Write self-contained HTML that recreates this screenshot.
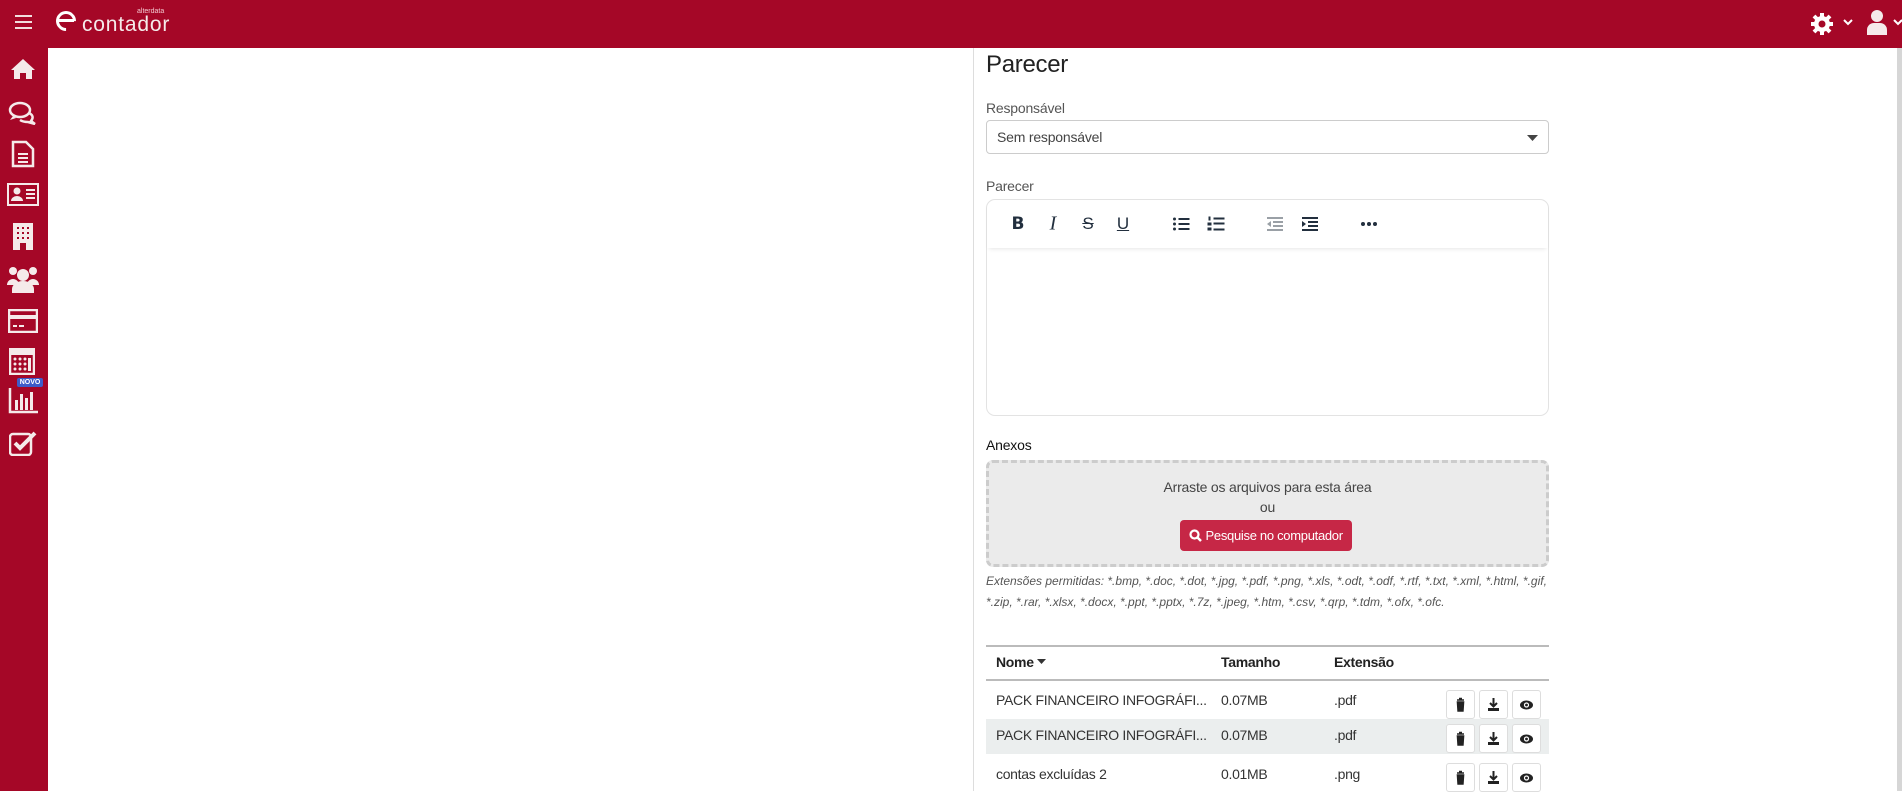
<!DOCTYPE html>
<html><head><meta charset="utf-8"><style>
*{box-sizing:border-box;margin:0;padding:0}
body{width:1902px;height:791px;overflow:hidden;background:#fff;font-family:"Liberation Sans",sans-serif;color:#333;position:relative}
.hdr{position:absolute;left:0;top:0;width:1902px;height:48px;background:#a50727}
.side{position:absolute;left:0;top:48px;width:48px;height:743px;background:#a50727}
.abs{position:absolute}
.panel{position:absolute;left:973px;top:48px;width:1px;height:743px;background:#ddd}
.scroll{position:absolute;left:1897px;top:48px;width:5px;height:743px;background:#d6d6d6}
.lbl{position:absolute;left:986px;font-size:14px;color:#555;letter-spacing:-0.2px}
.sel{position:absolute;left:986px;top:120px;width:563px;height:34px;border:1px solid #ccc;border-radius:4px;font-size:14px;color:#444;padding:8px 10px;letter-spacing:-0.2px}
.ed{position:absolute;left:986px;top:199px;width:563px;height:217px;border:1px solid #e3e3e3;border-radius:9px}
.tb{position:absolute;left:0;top:0;width:100%;height:48px;box-shadow:0 3px 4px -2px rgba(0,0,0,.1)}
.ic{position:absolute;top:24px;transform:translate(-50%,-50%);font-size:17px;color:#222f3e;font-weight:bold}
.drop{position:absolute;left:986px;top:460px;width:563px;height:107px;background:#ebebeb;border:3px dashed #ccc;border-radius:7px;text-align:center;font-size:14px;color:#444;letter-spacing:-0.2px}
.btn{position:absolute;left:1180px;top:520px;width:172px;height:31px;background:#c62746;border-radius:4px;color:#fff;font-size:13px;line-height:31px;text-align:center;letter-spacing:-0.3px}
.ext{position:absolute;left:986px;font-size:12px;font-style:italic;color:#555}
.row{position:absolute;left:986px;width:563px;font-size:14px;color:#333;letter-spacing:-0.3px}
.ab{position:absolute;width:29px;height:29px;border:1px solid #ddd;border-radius:3px;background:#fff}
</style></head><body>
<div class="hdr">
 <div class="abs" style="left:15px;top:15px;width:17px;height:2px;background:#f1dede;box-shadow:0 6px 0 #f1dede,0 12px 0 #f1dede"></div>
 <div class="abs" style="left:56px;top:11px;width:20px;height:20px;border:3px solid #fff;border-radius:50%;border-right-color:transparent;transform:rotate(45deg)"></div>
 <div class="abs" style="left:59px;top:19px;width:15px;height:3px;background:#fff"></div>
 <div class="abs" style="left:82px;top:13px;font-size:21px;color:#f5eaea;letter-spacing:0.8px;line-height:24px;font-weight:normal">contador</div>
 <div class="abs" style="left:137px;top:8px;font-size:7px;color:#f3c8cf">alterdata</div>
 <svg class="abs" style="left:1810px;top:12px" width="24" height="24" viewBox="0 0 24 24"><circle cx="12" cy="12" r="8" fill="#fff"/><g stroke="#fff" stroke-width="4"><line x1="12" y1="1" x2="12" y2="23"/><line x1="1" y1="12" x2="23" y2="12"/><line x1="4" y1="4" x2="20" y2="20"/><line x1="20" y1="4" x2="4" y2="20"/></g><circle cx="12" cy="12" r="3.5" fill="#a50727"/></svg>
 <svg class="abs" style="left:1843px;top:18px" width="10" height="8"><path d="M1 2l4 4 4-4" stroke="#fff" stroke-width="2" fill="none"/></svg>
 <svg class="abs" style="left:1866px;top:9px" width="22" height="26"><circle cx="11" cy="7" r="6" fill="#f5eaea"/><path d="M1 26v-5a7 7 0 0 1 7-7h6a7 7 0 0 1 7 7v5z" fill="#f5eaea"/></svg>
 <svg class="abs" style="left:1893px;top:18px" width="10" height="8"><path d="M1 2l4 4 4-4" stroke="#fff" stroke-width="2" fill="none"/></svg>
</div>
<div class="side">
 <svg class="abs" style="left:10px;top:10px" width="26" height="22" viewBox="0 0 26 22"><path d="M13 1L1 12h3v9h6v-6h6v6h6v-9h3z" fill="#f5eaea"/></svg>
 <svg class="abs" style="left:8px;top:53px" width="30" height="24"><ellipse cx="12" cy="9" rx="10" ry="7" fill="none" stroke="#f5eaea" stroke-width="2.5"/><path d="M5 15l-3 4 6-2" fill="#f5eaea"/><path d="M21 12q6 3 2 8l4 3-7-2q-5 0-8-2" fill="none" stroke="#f5eaea" stroke-width="2.5"/></svg>
 <svg class="abs" style="left:11px;top:92px" width="24" height="28"><path d="M2 2h13l7 7v17H2z" fill="none" stroke="#f5eaea" stroke-width="2.5"/><path d="M7 14h10M7 18h10M7 22h10" stroke="#f5eaea" stroke-width="2"/></svg>
 <svg class="abs" style="left:7px;top:135px" width="32" height="24"><rect x="1" y="1" width="30" height="21" fill="none" stroke="#f5eaea" stroke-width="2"/><circle cx="10" cy="8" r="3.5" fill="#f5eaea"/><path d="M4 18a6 5 0 0 1 12 0z" fill="#f5eaea"/><path d="M19 7h9M19 11h9M19 15h9" stroke="#f5eaea" stroke-width="2"/></svg>
 <svg class="abs" style="left:12px;top:174px" width="22" height="28"><rect x="1" y="1" width="20" height="27" fill="#f5eaea"/><g fill="#a50727"><rect x="5" y="5" width="2" height="2"/><rect x="10" y="5" width="2" height="2"/><rect x="15" y="5" width="2" height="2"/><rect x="5" y="10" width="2" height="2"/><rect x="10" y="10" width="2" height="2"/><rect x="15" y="10" width="2" height="2"/><rect x="5" y="15" width="2" height="2"/><rect x="10" y="15" width="2" height="2"/><rect x="15" y="15" width="2" height="2"/><rect x="8" y="21" width="6" height="7"/></g></svg>
 <svg class="abs" style="left:7px;top:217px" width="32" height="28"><circle cx="6" cy="6" r="4" fill="#f5eaea"/><circle cx="26" cy="6" r="4" fill="#f5eaea"/><circle cx="16" cy="10" r="6" fill="#f5eaea"/><path d="M0 20a6 6 0 0 1 12 0zM20 20a6 6 0 0 1 12 0zM5 28v-4a11 8 0 0 1 22 0v4z" fill="#f5eaea"/></svg>
 <svg class="abs" style="left:8px;top:261px" width="30" height="24"><rect x="1" y="1" width="28" height="22" fill="none" stroke="#f5eaea" stroke-width="2.5"/><rect x="1" y="6" width="28" height="4" fill="#f5eaea"/><path d="M5 17h4M11 17h5" stroke="#f5eaea" stroke-width="2"/></svg>
 <svg class="abs" style="left:9px;top:300px" width="26" height="27"><rect x="1" y="1" width="24" height="25" fill="none" stroke="#f5eaea" stroke-width="2.5"/><rect x="1" y="1" width="24" height="6" fill="#f5eaea"/><g fill="#f5eaea"><circle cx="6" cy="11" r="1.5"/><circle cx="11" cy="11" r="1.5"/><circle cx="16" cy="11" r="1.5"/><circle cx="6" cy="16" r="1.5"/><circle cx="11" cy="16" r="1.5"/><circle cx="16" cy="16" r="1.5"/><circle cx="6" cy="21" r="1.5"/><circle cx="11" cy="21" r="1.5"/><circle cx="16" cy="21" r="1.5"/><rect x="19" y="10" width="3" height="13"/></g></svg>
 <div class="abs" style="left:17px;top:330px;width:26px;height:9px;background:#3d5cc9;border-radius:2px;color:#fff;font-size:7px;font-weight:bold;text-align:center;line-height:9px">NOVO</div>
 <svg class="abs" style="left:8px;top:340px" width="30" height="26"><path d="M2 0v24h28" fill="none" stroke="#f5eaea" stroke-width="2.5"/><g fill="#f5eaea"><rect x="7" y="12" width="3" height="10"/><rect x="12" y="6" width="3" height="16"/><rect x="17" y="10" width="3" height="12"/><rect x="22" y="4" width="3" height="18"/></g></svg>
 <svg class="abs" style="left:9px;top:382px" width="28" height="26"><rect x="1" y="4" width="21" height="21" rx="3" fill="none" stroke="#f5eaea" stroke-width="2.5"/><path d="M6 13l5 5L26 3" fill="none" stroke="#f5eaea" stroke-width="4"/></svg>
</div>
<div class="panel"></div>
<div class="scroll"></div>
<div class="abs" style="left:986px;top:51px;font-size:24px;color:#222;letter-spacing:-0.3px">Parecer</div>
<div class="lbl" style="top:100px">Responsável</div>
<div class="sel">Sem responsável<svg class="abs" style="right:10px;top:14px" width="11" height="6"><path d="M0 0h11L5.5 6z" fill="#444"/></svg></div>
<div class="lbl" style="top:178px">Parecer</div>
<div class="ed"><div class="tb">
 <span class="ic" style="left:31px;font-family:'DejaVu Sans',sans-serif">B</span>
 <span class="ic" style="left:66px;font-family:'Liberation Serif',serif;font-style:italic;font-weight:normal;font-size:20px">I</span>
 <span class="ic" style="left:101px;text-decoration:line-through;font-weight:normal">S</span>
 <span class="ic" style="left:136px;text-decoration:underline;font-weight:normal">U</span>
 <svg class="ic" style="left:194px" width="17" height="14"><g fill="#222f3e"><circle cx="2" cy="2" r="1.5"/><circle cx="2" cy="7" r="1.5"/><circle cx="2" cy="12" r="1.5"/><rect x="6" y="1" width="11" height="2"/><rect x="6" y="6" width="11" height="2"/><rect x="6" y="11" width="11" height="2"/></g></svg>
 <svg class="ic" style="left:229px" width="17" height="15"><g fill="#222f3e"><rect x="1" y="0" width="2" height="4"/><rect x="0" y="6" width="4" height="3"/><rect x="0" y="11" width="4" height="3"/><rect x="6" y="1" width="11" height="2"/><rect x="6" y="6" width="11" height="2"/><rect x="6" y="12" width="11" height="2"/></g></svg>
 <svg class="ic" style="left:288px" width="16" height="14"><g fill="#9aa0a6"><rect x="0" y="0" width="16" height="2"/><rect x="6" y="4" width="10" height="2"/><rect x="6" y="8" width="10" height="2"/><rect x="0" y="12" width="16" height="2"/><path d="M0 7l4-3v6z"/></g></svg>
 <svg class="ic" style="left:323px" width="16" height="14"><g fill="#222f3e"><rect x="0" y="0" width="16" height="2"/><rect x="6" y="4" width="10" height="2"/><rect x="6" y="8" width="10" height="2"/><rect x="0" y="12" width="16" height="2"/><path d="M4 7L0 4v6z"/></g></svg>
 <svg class="ic" style="left:382px" width="16" height="4"><g fill="#222f3e"><circle cx="2" cy="2" r="2"/><circle cx="8" cy="2" r="2"/><circle cx="14" cy="2" r="2"/></g></svg>
</div></div>
<div class="abs" style="left:986px;top:437px;font-size:14px;color:#111;letter-spacing:-0.2px">Anexos</div>
<div class="drop"><div style="margin-top:16px">Arraste os arquivos para esta área</div><div style="margin-top:4px">ou</div></div>
<div class="btn"><svg style="vertical-align:-2px" width="13" height="13"><circle cx="5.5" cy="5.5" r="4" fill="none" stroke="#fff" stroke-width="2.2"/><path d="M8.5 8.5l3.5 3.5" stroke="#fff" stroke-width="2.5"/></svg> Pesquise no computador</div>
<div class="ext" style="top:574px">Extensões permitidas: *.bmp, *.doc, *.dot, *.jpg, *.pdf, *.png, *.xls, *.odt, *.odf, *.rtf, *.txt, *.xml, *.html, *.gif,</div>
<div class="ext" style="top:595px">*.zip, *.rar, *.xlsx, *.docx, *.ppt, *.pptx, *.7z, *.jpeg, *.htm, *.csv, *.qrp, *.tdm, *.ofx, *.ofc.</div>
<div class="abs" style="left:986px;top:645px;width:563px;height:2px;background:#bbb"></div>
<div class="row" style="top:654px;font-weight:bold;color:#222"><span class="abs" style="left:10px">Nome<svg width="10" height="6" style="margin-left:3px;vertical-align:2px"><path d="M0 0h9L4.5 5z" fill="#333"/></svg></span><span class="abs" style="left:235px">Tamanho</span><span class="abs" style="left:348px">Extensão</span></div>
<div class="abs" style="left:986px;top:679px;width:563px;height:2px;background:#bbb"></div>
<div class="abs" style="left:986px;top:719px;width:563px;height:35px;background:#ebeeee"></div>
<div class="row" style="top:692px"><span class="abs" style="left:10px">PACK FINANCEIRO INFOGRÁFI...</span><span class="abs" style="left:235px">0.07MB</span><span class="abs" style="left:348px">.pdf</span></div>
<div class="row" style="top:727px"><span class="abs" style="left:10px">PACK FINANCEIRO INFOGRÁFI...</span><span class="abs" style="left:235px">0.07MB</span><span class="abs" style="left:348px">.pdf</span></div>
<div class="row" style="top:766px"><span class="abs" style="left:10px">contas excluídas 2</span><span class="abs" style="left:235px">0.01MB</span><span class="abs" style="left:348px">.png</span></div>
<svg width="0" height="0" style="position:absolute"><defs>
<g id="tr"><path d="M4 3h7M6 1.5h3M4.5 5h6l-.6 9h-4.8z" stroke="#222" stroke-width="1.6" fill="#222"/></g>
<g id="dl"><path d="M7.5 1v8M4 6l3.5 3.5L11 6" stroke="#222" stroke-width="2" fill="none"/><rect x="2" y="11" width="11" height="3" fill="#222"/></g>
<g id="ey"><ellipse cx="7.5" cy="8" rx="6.5" ry="4.5" fill="#222"/><circle cx="7.5" cy="8" r="2.6" fill="#fff"/><circle cx="7.5" cy="8" r="1.4" fill="#222"/></g>
</defs></svg>
<div class="ab" style="left:1446px;top:690px"><svg style="margin:6px 6px" width="15" height="16"><use href="#tr"/></svg></div>
<div class="ab" style="left:1479px;top:690px"><svg style="margin:6px 6px" width="15" height="16"><use href="#dl"/></svg></div>
<div class="ab" style="left:1512px;top:690px"><svg style="margin:6px 6px" width="15" height="16"><use href="#ey"/></svg></div>
<div class="ab" style="left:1446px;top:724px"><svg style="margin:6px 6px" width="15" height="16"><use href="#tr"/></svg></div>
<div class="ab" style="left:1479px;top:724px"><svg style="margin:6px 6px" width="15" height="16"><use href="#dl"/></svg></div>
<div class="ab" style="left:1512px;top:724px"><svg style="margin:6px 6px" width="15" height="16"><use href="#ey"/></svg></div>
<div class="ab" style="left:1446px;top:763px"><svg style="margin:6px 6px" width="15" height="16"><use href="#tr"/></svg></div>
<div class="ab" style="left:1479px;top:763px"><svg style="margin:6px 6px" width="15" height="16"><use href="#dl"/></svg></div>
<div class="ab" style="left:1512px;top:763px"><svg style="margin:6px 6px" width="15" height="16"><use href="#ey"/></svg></div>
</body></html>
